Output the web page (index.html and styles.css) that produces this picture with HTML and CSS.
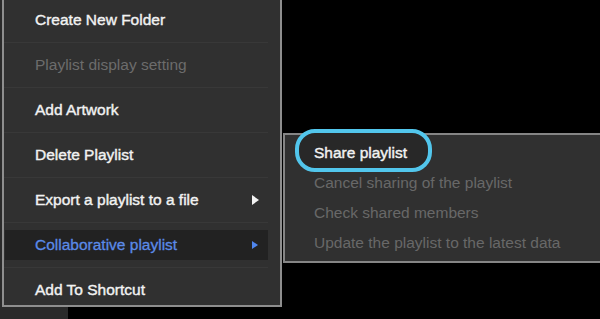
FILE: index.html
```html
<!DOCTYPE html>
<html lang="en">
<head>
    <meta charset="UTF-8">
    <meta name="viewport" content="width=device-width, initial-scale=1.0">
    <title>Playlist Menu</title>
    <link rel="stylesheet" href="styles.css">
</head>
<body>
    <div class="screen">
        <div class="sidebar"></div>

        <div class="menu">
            <div class="item"><div class="row"><span class="label">Create New Folder</span></div></div>
            <div class="item disabled"><div class="row"><span class="label">Playlist display setting</span></div></div>
            <div class="item"><div class="row"><span class="label">Add Artwork</span></div></div>
            <div class="item"><div class="row"><span class="label">Delete Playlist</span></div></div>
            <div class="item"><div class="row"><span class="label">Export a playlist to a file</span><span class="arrow"></span></div></div>
            <div class="item active"><div class="row"><span class="label">Collaborative playlist</span><span class="arrow"></span></div></div>
            <div class="item last"><div class="row"><span class="label">Add To Shortcut</span></div></div>
        </div>

        <div class="submenu">
            <div class="sub-item"><span class="label share">Share playlist</span></div>
            <div class="sub-item disabled"><span class="label">Cancel sharing of the playlist</span></div>
            <div class="sub-item disabled"><span class="label">Check shared members</span></div>
            <div class="sub-item disabled"><span class="label">Update the playlist to the latest data</span></div>
        </div>
    </div>
</body>
</html>
```

FILE: styles.css
```css
* {
    box-sizing: border-box;
}
body {
    margin: 0;
    background-color: #000;
    font-family: "Liberation Sans", Arial, sans-serif;
    font-size: 15.5px;
}
.screen {
    position: relative;
    width: 600px;
    height: 319px;
    overflow: hidden;
    background-color: #000;
}
.sidebar {
    width: 68px;
    height: 100%;
    background-color: #2a2a2a;
}

/* main context menu */
.menu {
    position: absolute;
    left: 2px;
    top: -2px;
    width: 280px;
    background-color: #303030;
    border: 2px solid #8e8e8e;
    border-top: none;
}
.item {
    margin: 0 12px 0 0;
    padding: 7px 0;
    border-bottom: 1px solid #383838;
}
.item.last {
    border-bottom: none;
    padding-bottom: 0;
}
.row {
    height: 30px;
    display: flex;
    align-items: center;
    justify-content: space-between;
    padding: 0 9px 0 30px;
    margin-left: 1px;
}
.label {
    color: #f2f2f2;
    -webkit-text-stroke: 0.4px #f2f2f2;
    white-space: nowrap;
}
.item.disabled .label {
    color: #6c6c6c;
    -webkit-text-stroke: 0;
}
.item.active .row {
    background-color: #222;
}
.item.active .label {
    color: #5b8ae8;
    -webkit-text-stroke: 0.3px #5b8ae8;
}
.arrow {
    width: 0;
    height: 0;
    border-top: 5px solid transparent;
    border-bottom: 5px solid transparent;
    border-left: 7px solid #f2f2f2;
}
.item.active .arrow {
    border-top-width: 4.5px;
    border-bottom-width: 4.5px;
    border-left: 6px solid #4f86ee;
    margin-right: 1px;
}

/* collaborative submenu */
.submenu {
    position: absolute;
    left: 283px;
    top: 133px;
    width: 330px;
    padding: 3px 0;
    background-color: #303030;
    border: 2px solid #858585;
    border-right: none;
}
.sub-item {
    height: 30px;
    display: flex;
    align-items: center;
    padding-left: 29px;
}
.sub-item.disabled .label {
    color: #686868;
    -webkit-text-stroke: 0;
}
.share {
    position: relative;
}
.share::before {
    content: "";
    position: absolute;
    left: -19px;
    right: -25px;
    top: -15px;
    bottom: -10px;
    border: 4px solid #52c6ec;
    border-radius: 20px;
    background-color: #282828;
    z-index: -1;
}
.sub-item:first-child {
    position: relative;
    z-index: 1;
}
```
